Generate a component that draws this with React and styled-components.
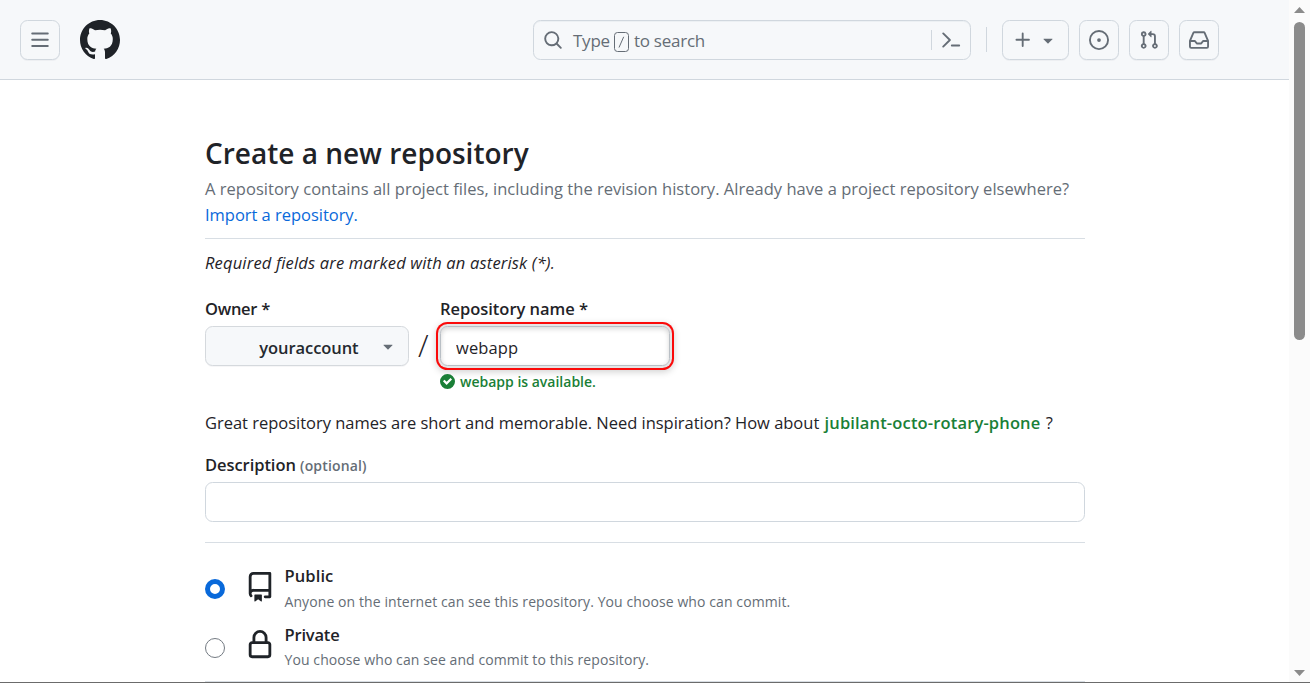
import React from "react";
import styled, { createGlobalStyle } from "styled-components";

const GlobalStyle = createGlobalStyle`
  * { box-sizing: border-box; }
  body {
    margin: 0;
    background: #fff;
    color: #1f2328;
    font-family: "Open Sans", "Noto Sans", sans-serif;
    font-size: 16.5px;
    line-height: 26px;
    overflow: hidden;
  }
`;

const Window = styled.div`
  display: flex;
  height: 683px;
  border-bottom: 1px solid #6b6b6b;
  overflow: hidden;
`;

const Page = styled.div`
  flex: 1;
  min-width: 0;
  overflow: hidden;
`;

const Header = styled.header`
  display: flex;
  align-items: center;
  height: 80px;
  padding: 0 70px 0 20px;
  background: #f6f8fa;
  border-bottom: 1px solid #d0d7de;
`;

const HeaderButton = styled.button`
  display: flex;
  align-items: center;
  justify-content: center;
  gap: 5px;
  width: ${(p) => p.$width || 40}px;
  height: 40px;
  margin: 1px 0 0;
  padding: 0;
  color: #656d76;
  background: #f6f8fa;
  border: 1px solid #d0d7de;
  border-radius: 7.5px;
  box-shadow: 0 1px 0 rgba(31, 35, 40, 0.04);
`;

const HomeLink = styled.a`
  display: flex;
  margin-left: 20px;
  margin-top: 1px;
  color: #1f2328;
`;

const SearchBox = styled.div`
  display: flex;
  align-items: center;
  width: 438px;
  height: 40px;
  margin: 1px 0 0 auto;
  padding: 0 9px;
  color: #656d76;
  border: 1px solid #d0d7de;
  border-radius: 7.5px;
  box-shadow: inset 0 1px 0 rgba(208, 215, 222, 0.25);
`;

const SearchText = styled.span`
  display: flex;
  align-items: center;
  flex: 1;
  margin-left: 10px;
  padding-top: 2px;
  font-size: 17px;
  letter-spacing: -0.24px;
  white-space: pre;
`;

const KeyHint = styled.svg`
  margin: 1px 5px 0 4px;
`;

const Divider = styled.span`
  width: 1px;
  height: ${(p) => p.$height}px;
  margin: ${(p) => p.$margin};
  background: #d0d7de;
`;

const ActionGroup = styled.div`
  display: flex;
  gap: 10px;
`;

const Main = styled.main`
  width: 880px;
  margin-left: 205px;
  padding-top: 55px;
`;

const Title = styled.h1`
  margin: 0 0 5px;
  font-size: 28px;
  line-height: 36px;
  font-weight: 600;
`;

const Lead = styled.p`
  margin: 0;
  color: #656d76;
  letter-spacing: 0.026px;
  white-space: nowrap;
`;

const Link = styled.a`
  color: #0969da;
  letter-spacing: -0.03px;
`;

const Rule = styled.hr`
  height: 1px;
  margin: ${(p) => p.$margin};
  border: 0;
  background: #d8dee4;
`;

const RequiredNote = styled.p`
  margin: 0 0 20px;
  font-style: italic;
  letter-spacing: 0.17px;
`;

const NameRow = styled.div`
  display: flex;
  height: 97px;
`;

const Field = styled.div`
  width: ${(p) => p.$width};
`;

const Label = styled.label`
  display: block;
  margin-bottom: 4px;
  font-weight: 600;
  letter-spacing: ${(p) => p.$spacing || 0}px;
  white-space: nowrap;
`;

const Optional = styled.span`
  color: #656d76;
  font-size: 14px;
  line-height: 1;
  letter-spacing: 0.15px;
`;

const OwnerButton = styled.button`
  display: flex;
  align-items: center;
  justify-content: flex-end;
  gap: 19.5px;
  width: 204px;
  height: 40px;
  padding: 3px 10px 0 0;
  color: #24292f;
  font: 600 16.5px/26px "Open Sans", "Noto Sans", sans-serif;
  letter-spacing: -0.08px;
  background: #f6f8fa;
  border: 1px solid #d5d9dd;
  border-radius: 7.5px;
  box-shadow: 0 1px 0 rgba(31, 35, 40, 0.04);

  svg {
    margin-top: -3px;
    color: #656d76;
  }
`;

const Slash = styled.span`
  width: 31px;
  padding: 35px 0 0 9px;
  font-size: 31px;
  font-weight: 300;
  line-height: 28px;
`;

const TextInput = styled.input`
  display: block;
  width: 100%;
  height: 40px;
  padding: 3px 15px 0;
  color: #1f2328;
  font: 400 16.5px/26px "Open Sans", "Noto Sans", sans-serif;
  letter-spacing: 0.1px;
  background: #fff;
  border: 1px solid #d0d7de;
  border-radius: 7.5px;
  outline: 0;
`;

const HighlightedInput = styled(TextInput)`
  border-color: #b9bfc5;
  box-shadow: inset 0 2px 5px rgba(0, 0, 0, 0.16), 0 0 0 2px #e4e5e6,
    0 0 0 4px #fb0a0a, 0 2px 7px 4px rgba(0, 0, 0, 0.18);
`;

const Availability = styled.div`
  display: flex;
  align-items: center;
  gap: 5px;
  margin-top: 5px;
  color: #1a7f37;
  font-size: 14px;
  font-weight: 600;
  line-height: 22px;
  white-space: nowrap;

  svg {
    margin-top: -1px;
  }
`;

const Hint = styled.p`
  margin: 17px 0 16px;
  letter-spacing: -0.02px;
  white-space: nowrap;
`;

const Suggestion = styled.b`
  margin: 0 1px;
  color: #1a7f37;
  font-weight: 600;
  letter-spacing: 0.15px;
`;

const Option = styled.label`
  display: flex;
  align-items: flex-start;
  height: ${(p) => p.$height}px;
`;

const Radio = styled.span`
  width: 20px;
  height: 20px;
  margin: 16px 20px 0 0;
  border: ${(p) => (p.$checked ? "5px solid #0969da" : "1px solid #737a82")};
  border-radius: 50%;
`;

const OptionIcon = styled.span`
  display: flex;
  width: 30px;
  margin: ${(p) => p.$top}px 9.5px 0 0;
`;

const OptionTitle = styled.div`
  font-weight: 600;
  letter-spacing: ${(p) => p.$spacing}px;
`;

const OptionText = styled.div`
  padding-top: ${(p) => p.$top || 0}px;
  color: #656d76;
  font-size: 14px;
  line-height: 24px;
  letter-spacing: 0.09px;
`;

const ScrollTrack = styled.div`
  display: flex;
  flex-direction: column;
  align-items: center;
  width: 21px;
  padding: 7px 0 6px;
  color: #8b8b8b;
  background: #fbfbfb;
`;

const ScrollThumb = styled.div`
  width: 11px;
  height: 318px;
  margin: 9px 0 auto;
  background: #8b8b8b;
  border-radius: 5.5px;
`;

const ICONS = {
  menu: "M1 2.75A.75.75 0 0 1 1.75 2h12.5a.75.75 0 0 1 0 1.5H1.75A.75.75 0 0 1 1 2.75Zm0 5A.75.75 0 0 1 1.75 7h12.5a.75.75 0 0 1 0 1.5H1.75A.75.75 0 0 1 1 7.75ZM1.75 12h12.5a.75.75 0 0 1 0 1.5H1.75a.75.75 0 0 1 0-1.5Z",
  github: "M8 0c4.42 0 8 3.58 8 8a8.013 8.013 0 0 1-5.45 7.59c-.4.08-.55-.17-.55-.38 0-.27.01-1.13.01-2.2 0-.75-.25-1.23-.54-1.48 1.78-.2 3.65-.88 3.65-3.95 0-.88-.31-1.59-.82-2.15.08-.2.36-1.02-.08-2.12 0 0-.67-.22-2.2.82-.64-.18-1.32-.27-2-.27-.68 0-1.36.09-2 .27-1.53-1.03-2.2-.82-2.2-.82-.44 1.1-.16 1.92-.08 2.12-.51.56-.82 1.28-.82 2.15 0 3.06 1.86 3.75 3.64 3.95-.23.2-.44.55-.51 1.07-.46.21-1.61.55-2.33-.66-.15-.24-.6-.83-1.23-.82-.67.01-.27.38.01.53.34.19.73.9.82 1.13.16.45.68 1.31 2.69.94 0 .67.01 1.3.01 1.49 0 .21-.15.45-.55.38A7.995 7.995 0 0 1 0 8c0-4.42 3.58-8 8-8Z",
  search: "M10.68 11.74a6 6 0 0 1-7.922-8.982 6 6 0 0 1 8.982 7.922l3.04 3.04a.749.749 0 0 1-.326 1.275.749.749 0 0 1-.734-.215ZM11.5 7a4.499 4.499 0 1 0-8.997 0A4.499 4.499 0 0 0 11.5 7Z",
  plus: "M7.75 2a.75.75 0 0 1 .75.75V7h4.25a.75.75 0 0 1 0 1.5H8.5v4.25a.75.75 0 0 1-1.5 0V8.5H2.75a.75.75 0 0 1 0-1.5H7V2.75A.75.75 0 0 1 7.75 2Z",
  caret: "m4.427 7.427 3.396 3.396a.25.25 0 0 0 .354 0l3.396-3.396A.25.25 0 0 0 11.396 7H4.604a.25.25 0 0 0-.177.427Z",
  issue: "M8 9.5a1.5 1.5 0 1 0 0-3 1.5 1.5 0 0 0 0 3Z M8 0a8 8 0 1 1 0 16A8 8 0 0 1 8 0ZM1.5 8a6.5 6.5 0 1 0 13 0 6.5 6.5 0 0 0-13 0Z",
  pull: "M1.5 3.25a2.25 2.25 0 1 1 3 2.122v5.256a2.251 2.251 0 1 1-1.5 0V5.372A2.25 2.25 0 0 1 1.5 3.25Zm5.677-.177L9.573.677A.25.25 0 0 1 10 .854V2.5h1A2.5 2.5 0 0 1 13.5 5v5.628a2.251 2.251 0 1 1-1.5 0V5a1 1 0 0 0-1-1h-1v1.646a.25.25 0 0 1-.427.177L7.177 3.427a.25.25 0 0 1 0-.354ZM3.75 2.5a.75.75 0 1 0 0 1.5.75.75 0 0 0 0-1.5Zm0 9.5a.75.75 0 1 0 0 1.5.75.75 0 0 0 0-1.5Zm8.25.75a.75.75 0 1 0 1.5 0 .75.75 0 0 0-1.5 0Z",
  inbox: "M2.8 2.06A1.75 1.75 0 0 1 4.41 1h7.18c.7 0 1.333.417 1.61 1.06l2.74 6.395c.04.093.06.194.06.295v4.5A1.75 1.75 0 0 1 14.25 15H1.75A1.75 1.75 0 0 1 0 13.25v-4.5c0-.101.02-.202.06-.295Zm1.61.44a.25.25 0 0 0-.23.152L1.887 8H4.75a.75.75 0 0 1 .6.3L6.625 10h2.75l1.275-1.7a.75.75 0 0 1 .6-.3h2.863L11.82 2.652a.25.25 0 0 0-.23-.152Zm10.09 7h-2.875l-1.275 1.7a.75.75 0 0 1-.6.3h-3.5a.75.75 0 0 1-.6-.3L4.375 9.5H1.5v3.75c0 .138.112.25.25.25h12.5a.25.25 0 0 0 .25-.25Z",
  check: "M6 0a6 6 0 1 1 0 12A6 6 0 0 1 6 0Zm-.705 8.737L9.63 4.403 8.392 3.166 5.295 6.263l-1.7-1.702L2.356 5.8l2.938 2.938Z",
  repo: "M2 2.5A2.5 2.5 0 0 1 4.5 0h8.75a.75.75 0 0 1 .75.75v12.5a.75.75 0 0 1-.75.75h-2.5a.75.75 0 0 1 0-1.5h1.75v-2h-8a1 1 0 0 0-.714 1.7.75.75 0 1 1-1.072 1.05A2.495 2.495 0 0 1 2 11.5Zm10.5-1h-8a1 1 0 0 0-1 1v6.708A2.486 2.486 0 0 1 4.5 9h8ZM5 12.25a.25.25 0 0 1 .25-.25h3.5a.25.25 0 0 1 .25.25v3.25a.25.25 0 0 1-.4.2l-1.45-1.087a.249.249 0 0 0-.3 0L5.4 15.7a.25.25 0 0 1-.4-.2Z",
  lock: "M4 4a4 4 0 0 1 8 0v2h.25c.966 0 1.75.784 1.75 1.75v5.5A1.75 1.75 0 0 1 12.25 15h-8.5A1.75 1.75 0 0 1 2 13.25v-5.5C2 6.784 2.784 6 3.75 6H4Zm8.25 3.5h-8.5a.25.25 0 0 0-.25.25v5.5c0 .138.112.25.25.25h8.5a.25.25 0 0 0 .25-.25v-5.5a.25.25 0 0 0-.25-.25ZM10.5 6V4a2.5 2.5 0 1 0-5 0v2Z",
};

function Icon({ name, size = 20, box = 16 }) {
  return (
    <svg width={size} height={size} viewBox={`0 0 ${box} ${box}`} fill="currentColor" aria-hidden="true">
      <path d={ICONS[name]} />
    </svg>
  );
}

function Visibility({ icon, title, text, checked, height, iconTop, spacing, textTop }) {
  return (
    <Option $height={height}>
      <Radio $checked={checked} />
      <OptionIcon $top={iconTop}>
        <Icon name={icon} size={30} />
      </OptionIcon>
      <div>
        <OptionTitle $spacing={spacing}>{title}</OptionTitle>
        <OptionText $top={textTop}>{text}</OptionText>
      </div>
    </Option>
  );
}

export default function App() {
  return (
    <Window>
      <GlobalStyle />
      <Page>
        <Header>
          <HeaderButton aria-label="Menu"><Icon name="menu" /></HeaderButton>
          <HomeLink><Icon name="github" size={40} /></HomeLink>
          <SearchBox>
            <Icon name="search" />
            <SearchText>
              Type
              <KeyHint width="15" height="20" viewBox="0 0 15 20" fill="none" stroke="currentColor">
                <rect x="0.5" y="0.5" width="14" height="19" rx="3" />
                <path d="M9.7 4.8 5 15.5" />
              </KeyHint>
              to search
            </SearchText>
            <Divider $height={20} $margin="0 9px 0 0" />
            <svg width="20" height="20" viewBox="0 0 20 20" fill="none" stroke="currentColor" strokeWidth="1.9" strokeLinecap="round" strokeLinejoin="round">
              <path d="M2.2 3.4 8.9 10l-6.7 6.6M10.8 15.5h7.4" />
            </svg>
          </SearchBox>
          <Divider $height={25} $margin="0 15px" />
          <ActionGroup>
            <HeaderButton $width={67} aria-label="Create new">
              <Icon name="plus" />
              <Icon name="caret" />
            </HeaderButton>
            <HeaderButton aria-label="Issues"><Icon name="issue" /></HeaderButton>
            <HeaderButton aria-label="Pull requests"><Icon name="pull" /></HeaderButton>
            <HeaderButton aria-label="Inbox"><Icon name="inbox" /></HeaderButton>
          </ActionGroup>
        </Header>
        <Main>
          <Title>Create a new repository</Title>
          <Lead>
            A repository contains all project files, including the revision history. Already have a project repository elsewhere?
            <br />
            <Link>Import a repository.</Link>
          </Lead>
          <Rule $margin="10px 0 11px" />
          <RequiredNote>Required fields are marked with an asterisk (*).</RequiredNote>
          <NameRow>
            <Field $width="204px">
              <Label $spacing={-0.27}>Owner *</Label>
              <OwnerButton>youraccount<Icon name="caret" /></OwnerButton>
            </Field>
            <Slash>/</Slash>
            <Field $width="230px">
              <Label $spacing={-0.03}>Repository name *</Label>
              <HighlightedInput defaultValue="webapp" />
              <Availability><Icon name="check" size={15} box={12} />webapp is available.</Availability>
            </Field>
          </NameRow>
          <Hint>
            Great repository names are short and memorable. Need inspiration? How about{" "}
            <Suggestion>jubilant-octo-rotary-phone</Suggestion> ?
          </Hint>
          <Label $spacing={-0.06}>Description <Optional>(optional)</Optional></Label>
          <TextInput />
          <Rule $margin="20px 0 20px" />
          <Visibility icon="repo" title="Public" text="Anyone on the internet can see this repository. You choose who can commit." checked height={59} iconTop={9} spacing={0.1} textTop={1} />
          <Visibility icon="lock" title="Private" text="You choose who can see and commit to this repository." height={59} iconTop={8} spacing={-0.18} />
          <Rule $margin="0" />
        </Main>
      </Page>
      <ScrollTrack>
        <svg width="11" height="6" fill="currentColor"><path d="M0 6 5.5 0 11 6Z" /></svg>
        <ScrollThumb />
        <svg width="11" height="6" fill="currentColor"><path d="M0 0h11L5.5 6Z" /></svg>
      </ScrollTrack>
    </Window>
  );
}
